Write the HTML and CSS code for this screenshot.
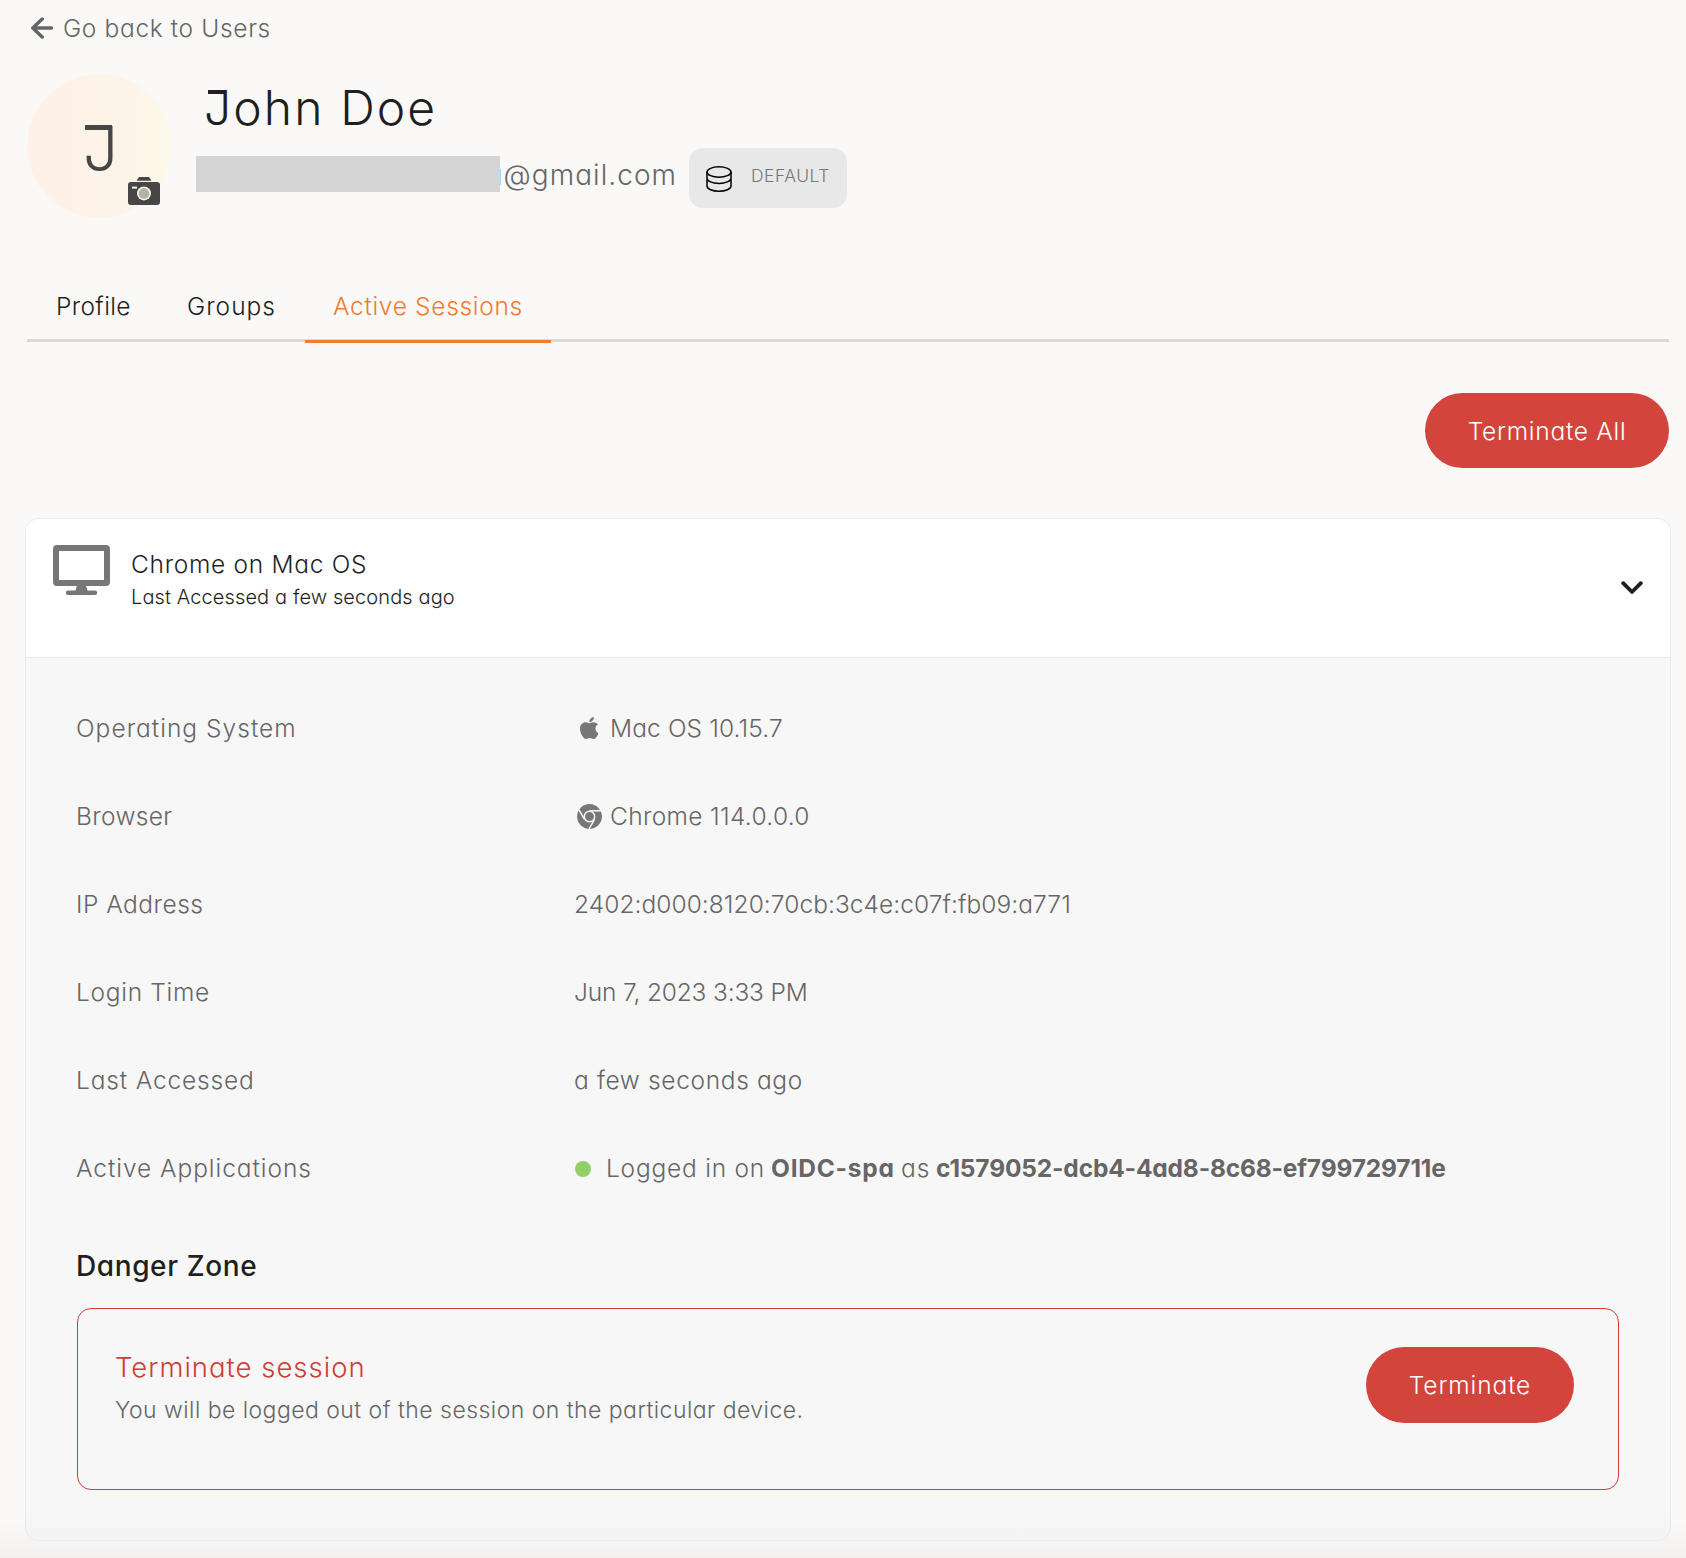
FILE: index.html
```html
<!DOCTYPE html>
<html lang="en">
<head>
<meta charset="utf-8">
<title>John Doe - Active Sessions</title>
<link rel="stylesheet" href="styles.css">
</head>
<body>
<main class="page">
  <a class="back">
    <svg class="back-icon" width="24" height="22" viewBox="0 0 24 22"><path d="M21.5 11H3M12.2 2 2.8 11l9.4 9" fill="none" stroke="currentColor" stroke-width="3.5" stroke-linecap="round" stroke-linejoin="round"/></svg>
    <span class="t-back">Go back to Users</span>
  </a>

  <header class="user">
    <div class="avatar">
      <span class="avatar-letter">J</span>
      <svg class="camera" width="32" height="28" viewBox="0 0 32 28"><path d="M11 0h10l2.5 3.8h-15z" fill="#464646"/><rect y="5" width="32" height="23" rx="3" fill="#464646"/><rect x="4" y="9.6" width="5" height="2" fill="#fdf6ea"/><circle cx="16" cy="16.4" r="7" fill="#fdf6ea"/><circle cx="16" cy="16.4" r="5.3" fill="#b5b1a8"/></svg>
    </div>
    <div class="identity">
      <h1 class="name">John Doe</h1>
      <div class="contact">
        <span class="redacted"></span>
        <span class="email">u@gmail.com</span>
        <span class="badge">
          <svg width="26" height="28" viewBox="0 0 26 28" fill="none" stroke="#000" stroke-width="1.5"><ellipse cx="13" cy="7" rx="12" ry="5.2"/><path d="M1 7v14c0 2.9 5.4 5.2 12 5.2s12-2.3 12-5.2V7M1 13.2c0 2.9 5.4 5.2 12 5.2s12-2.3 12-5.2"/></svg>
          <span class="badge-text">DEFAULT</span>
        </span>
      </div>
    </div>
  </header>

  <nav class="tabs">
    <a class="tab tab-profile">Profile</a>
    <a class="tab tab-groups">Groups</a>
    <a class="tab tab-sessions active">Active Sessions</a>
  </nav>

  <div class="actions">
    <button class="btn btn-all"><span>Terminate All</span></button>
  </div>

  <section class="card">
    <div class="card-head">
      <svg class="monitor" width="57" height="50" viewBox="0 0 57 50" fill="#777"><path fill-rule="evenodd" d="M4 0h49a4 4 0 0 1 4 4v33a4 4 0 0 1-4 4H4a4 4 0 0 1-4-4V4a4 4 0 0 1 4-4zm2 6v29h45V6z"/><path d="M24 40h9l1.4 5.6H42a2.2 2.2 0 0 1 0 4.4H15a2.2 2.2 0 0 1 0-4.4h7.6z"/></svg>
      <div class="device">
        <div class="device-name">Chrome on Mac OS</div>
        <div class="device-time">Last Accessed a few seconds ago</div>
      </div>
      <svg class="chevron" width="22" height="14" viewBox="0 0 22 14"><path d="M2.2 2.2 11 11l8.8-8.8" fill="none" stroke="#1f1f1f" stroke-width="3.8" stroke-linecap="round" stroke-linejoin="round"/></svg>
    </div>
    <div class="card-body">
      <dl class="details">
        <dt class="l-os">Operating System</dt>
        <dd><svg class="os-icon" width="18" height="22" viewBox="4 32 366 448" preserveAspectRatio="none" fill="#777"><path d="M318.7 268.7c-.2-36.7 16.4-64.4 50-84.8-18.8-26.9-47.2-41.7-84.7-44.6-35.5-2.8-74.3 20.7-88.5 20.7-15 0-49.4-19.7-76.4-19.7C63.3 141.2 4 184.8 4 273.5q0 39.3 14.4 81.2c12.8 36.7 59 126.7 107.2 125.2 25.2-.6 43-17.9 75.8-17.9 31.8 0 48.3 17.9 76.4 17.9 48.6-.7 90.4-82.5 102.6-119.3-65.2-30.7-61.7-90-61.7-91.9zm-56.6-164.2c27.3-32.4 24.8-61.9 24-72.5-24.1 1.4-52 16.4-67.9 34.9-17.5 19.8-27.8 44.3-25.6 71.9 26.1 2 49.9-11.4 69.5-34.3z"/></svg><span class="v-os">Mac OS 10.15.7</span></dd>
        <dt class="l-browser">Browser</dt>
        <dd><svg class="browser-icon" width="25" height="25" viewBox="0 0 25 25"><circle cx="12.5" cy="12.5" r="12.4" fill="#777"/><g fill="none" stroke="#f7f7f7" stroke-width="1.5"><circle cx="12.5" cy="12.5" r="5.2"/><path d="M12.5 6.8H24M7.5 15.4 2 5.9M17.5 15.4 12 25"/></g></svg><span class="v-browser">Chrome 114.0.0.0</span></dd>
        <dt class="l-ip">IP Address</dt>
        <dd><span class="v-ip">2402:d000:8120:70cb:3c4e:c07f:fb09:a771</span></dd>
        <dt class="l-login">Login Time</dt>
        <dd><span class="v-login">Jun 7, 2023 3:33 PM</span></dd>
        <dt class="l-last">Last Accessed</dt>
        <dd><span class="v-last">a few seconds ago</span></dd>
        <dt class="l-apps">Active Applications</dt>
        <dd><i class="dot"></i><span class="app-state">Logged in on</span><b class="app-name">OIDC-spa</b><span class="app-as">as</span><b class="app-id">c1579052-dcb4-4ad8-8c68-ef799729711e</b></dd>
      </dl>
      <h2 class="danger-title">Danger Zone</h2>
      <div class="danger">
        <div>
          <div class="danger-action">Terminate session</div>
          <div class="danger-text">You will be logged out of the session on the particular device.</div>
        </div>
        <button class="btn btn-one"><span>Terminate</span></button>
      </div>
    </div>
  </section>
</main>
</body>
</html>
```
FILE: styles.css
```css
* { box-sizing: border-box; }
body {
  margin: 0;
  background: #faf9f8;
  color: #1f1f1f;
  font: 300 24.5px/40px Inter, "Liberation Sans", sans-serif;
  font-feature-settings: "cv11";
  white-space: nowrap;
}
h1, h2, dl, dd { margin: 0; }
.page {
  height: 1558px;
  padding: 8px 15px 0 25px;
  overflow: hidden;
  background: linear-gradient(#faf9f800 1518px, #f2f1f0 1558px);
}
.back { display: flex; align-items: center; gap: 9px; padding-left: 5px; color: #666; letter-spacing: .65px; }

.user { display: flex; height: 144px; margin: 26px 0 0 2px; }
.avatar {
  position: relative;
  width: 144px;
  height: 144px;
  border-radius: 50%;
  background: linear-gradient(90deg, #fff1e8, #fdf3e9 65%, #fdf9ea);
}
.avatar-letter { display: block; padding: 21px 0 0 56px; font-size: 62px; line-height: 108px; color: #464646; }
/* top bar of the capital J */
.avatar-letter::before { content: ""; position: absolute; left: 58px; top: 51px; width: 27px; height: 5px; background: #464646; }
.camera { position: absolute; left: 101px; top: 103px; }
.identity { padding: 4px 0 0 25px; }
.name { position: relative; padding-left: 8px; font-size: 48px; line-height: 60px; font-weight: 300; letter-spacing: 2.1px; }
.name::before { content: ""; position: absolute; left: 12px; top: 12px; width: 17px; height: 4px; background: #1f1f1f; }
.contact { display: flex; align-items: flex-start; height: 60px; margin-top: 10px; }
.redacted { position: relative; z-index: 1; width: 304px; height: 36px; margin-top: 8px; background: #d5d5d5; }
.email { width: 203px; margin: 7px 0 0 -14px; font-size: 28px; color: #666; letter-spacing: 1.05px; }
.badge {
  display: flex;
  align-items: center;
  width: 158px;
  height: 60px;
  padding-left: 17px;
  gap: 19px;
  border-radius: 14px;
  background: #e8e8e8;
}
.badge svg { margin-top: 2px; }
.badge-text { margin-top: -4px; font-size: 17.5px; color: #777; letter-spacing: .5px; }

.tabs { display: flex; height: 56px; margin: 68px 0 0 2px; width: 1642px; border-bottom: 3px solid #dad9d8; }
.tab { height: 57px; flex: none; }
.tab-profile { padding-left: 29px; width: 132px; letter-spacing: .35px; }
.tab-groups { padding-left: 28px; width: 146px; letter-spacing: 1px; }
.tab-sessions { padding-left: 28px; width: 246px; letter-spacing: .68px; }
.active { color: #f07b31; border-bottom: 3px solid #f07b31; }

.actions { display: flex; justify-content: flex-end; padding: 51px 2px 0 0; }
.btn {
  display: flex;
  justify-content: center;
  align-items: center;
  flex: none;
  height: 75px;
  padding: 0;
  border: 0;
  border-radius: 38px;
  background: #d3453c;
  color: #fff;
  font: inherit;
  font-feature-settings: inherit;
}
.btn-all { width: 244px; letter-spacing: .72px; }
.btn-one { width: 208px; height: 76px; letter-spacing: .88px; }

.card { height: 1023px; margin-top: 50px; border: 1px solid #e9e9e9; border-radius: 14px; background: #f7f7f7; overflow: hidden; }
.card-head { display: flex; height: 139px; padding: 26px 27px 0; background: #fff; border-bottom: 1px solid #e9e9e9; }
.device { flex: 1; padding-left: 21px; margin-top: -1px; }
.device-name { height: 38px; letter-spacing: .7px; }
.device-time { font-size: 20px; line-height: 30px; letter-spacing: .11px; }
.chevron { margin-top: 36px; }
.card-body { padding: 26px 51px 0; background: linear-gradient(#f7f7f700 855px, #f3f3f3 885px); height: 884px; }
.details { display: grid; grid-template-columns: 498px 1fr; grid-auto-rows: 88px; color: #666; }
dt, dd { display: flex; align-items: center; }
dt { margin-left: -1px; }
dd > span:first-child { margin-left: -1px; }
.l-os { letter-spacing: 1.03px; }
.l-browser { letter-spacing: .33px; }
.l-ip { letter-spacing: .5px; }
.l-login { letter-spacing: .7px; }
.l-last { letter-spacing: .85px; }
.l-apps { letter-spacing: .95px; }
.v-os { letter-spacing: .12px; }
.v-browser { letter-spacing: .33px; }
.v-ip { letter-spacing: .06px; }
.v-login { letter-spacing: -.17px; }
.v-last { letter-spacing: .65px; }
.os-icon { margin: 0 12px 0 5px; }
.browser-icon { margin: 0 8px 0 2px; }
.dot { width: 16px; height: 16px; margin: 1px 15px 0 0; border-radius: 50%; background: #90d068; }
.app-state { width: 165px; letter-spacing: .78px; }
.app-name { width: 130px; letter-spacing: .75px; }
.app-as { width: 35px; letter-spacing: .9px; }
.app-id { letter-spacing: -.16px; }
b { font-weight: 700; }
.danger-title { margin: 34px 0 22px -1px; font-size: 28px; line-height: 40px; font-weight: 500; letter-spacing: .6px; }
.danger { display: flex; justify-content: space-between; height: 182px; padding: 38px 44px 0 37px; border: 1px solid #cf3d36; border-radius: 14px; }
.danger-action { margin-top: 2px; font-size: 27.5px; line-height: 36px; color: #cf3d36; letter-spacing: 1px; }
.danger-text { margin-top: 9px; font-size: 23px; line-height: 32px; color: #666; letter-spacing: .46px; }
```
